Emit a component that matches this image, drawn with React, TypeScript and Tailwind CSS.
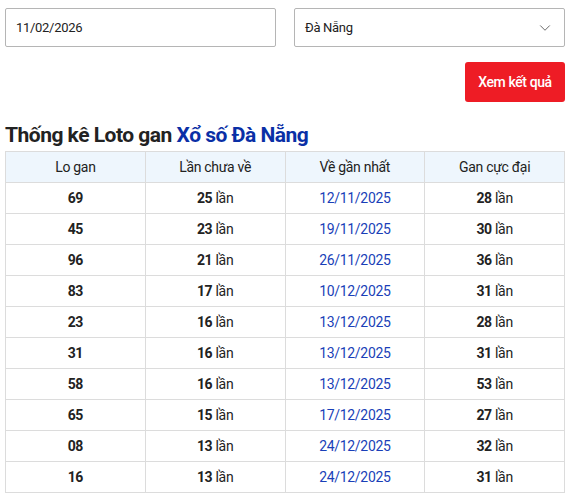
import { ChevronDown } from 'lucide-react'

const rows = [
  ['69', '25', '12/11/2025', '28'],
  ['45', '23', '19/11/2025', '30'],
  ['96', '21', '26/11/2025', '36'],
  ['83', '17', '10/12/2025', '31'],
  ['23', '16', '13/12/2025', '28'],
  ['31', '16', '13/12/2025', '31'],
  ['58', '16', '13/12/2025', '53'],
  ['65', '15', '17/12/2025', '27'],
  ['08', '13', '24/12/2025', '32'],
  ['16', '13', '24/12/2025', '31'],
]

export default function App() {
  return (
    <div className="w-[568px] bg-white pl-[5px] pr-[3px] pt-2 text-[#222]" style={{ fontFamily: 'Roboto, "Noto Sans", sans-serif' }}>
      <div className="grid grid-cols-2 gap-[18px]">
        <div className="h-[39px] border border-[#b5b5b5] rounded-[2px] flex items-center px-[10px] text-[13px] tracking-[-0.3px]">
          11/02/2026
        </div>
        <div className="h-[39px] border border-[#b5b5b5] rounded-[2px] flex items-center justify-between pl-[10px] pr-[10px] text-[13px] tracking-[-0.3px]">
          <span>Đà Nẵng</span>
          <ChevronDown size={18} strokeWidth={1.3} className="text-[#666]" />
        </div>
      </div>
      <div className="flex justify-end mt-[15px]">
        <button className="h-[40px] w-[100px] bg-[#ee1c25] rounded-[3px] text-white text-[14px] font-medium tracking-[-0.4px]">
          Xem kết quả
        </button>
      </div>
      <h2 className="mt-[18px] text-[21px] font-bold leading-[30px] tracking-[-0.5px]">
        Thống kê Loto gan <span className="text-[#0a2fa6]">Xổ số Đà Nẵng</span>
      </h2>
      <table className="w-full border-collapse mt-[1px] text-[14px] tracking-[-0.3px] table-fixed">
        <thead>
          <tr className="bg-[#eef6fd]">
            {['Lo gan', 'Lần chưa về', 'Về gần nhất', 'Gan cực đại'].map((h) => (
              <th key={h} className="border border-[#dcdcdc] h-[31px] font-normal">{h}</th>
            ))}
          </tr>
        </thead>
        <tbody>
          {rows.map((r, i) => (
            <tr key={i}>
              <td className="border border-[#dcdcdc] h-[31px] text-center font-bold">{r[0]}</td>
              <td className="border border-[#dcdcdc] text-center"><b>{r[1]}</b> lần</td>
              <td className="border border-[#dcdcdc] text-center text-[#1a3fb8]">{r[2]}</td>
              <td className="border border-[#dcdcdc] text-center"><b>{r[3]}</b> lần</td>
            </tr>
          ))}
        </tbody>
      </table>
    </div>
  )
}
